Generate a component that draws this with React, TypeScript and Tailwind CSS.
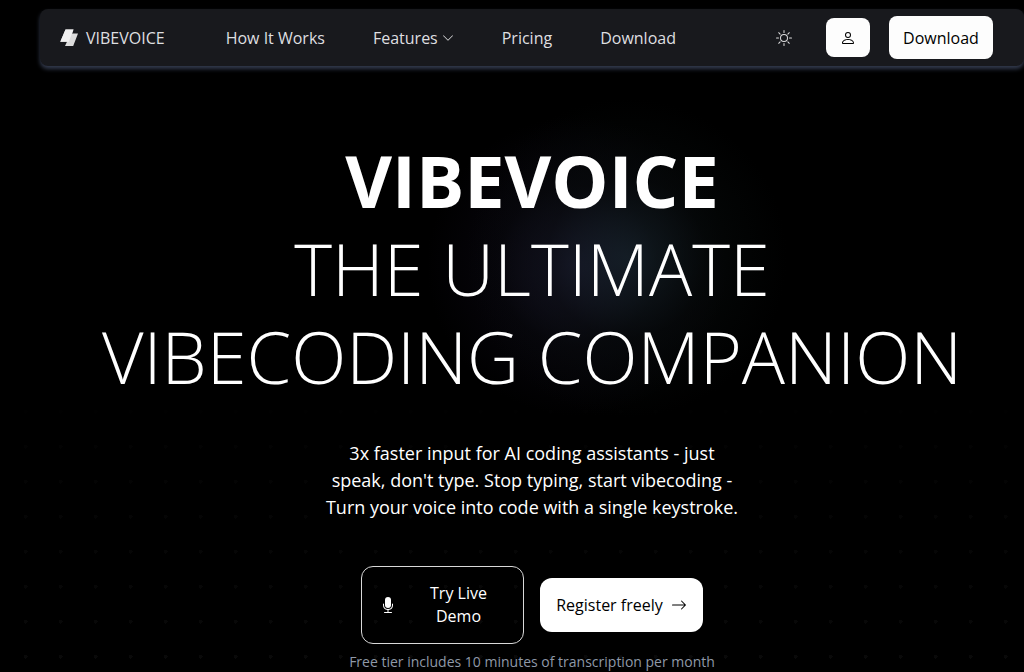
import { BsArrowRight, BsChevronDown, BsMicFill, BsPerson, BsSun } from 'react-icons/bs';

function Logo() {
  return (
    <svg width="18" height="18" viewBox="0 0 18 18" aria-hidden="true">
      <path d="M5.5 0.5H13.5L12 4.5H18L13.2 17H5L7 12.8H0.3Z" fill="#dcdcdc" />
      <path d="M5.5 0.5H13.5L8.8 12.8H0.3Z" fill="#f1f1f1" />
    </svg>
  );
}

function Header() {
  return (
    <header className="flex items-center justify-between min-h-[57px] pl-5 pr-[31px] rounded-lg bg-[#18191d] text-[#dfdfe0] shadow-[0_3px_4px_0_#333b4e]">
      <div className="flex items-center gap-[61px]">
        <a href="#" className="flex items-center gap-2">
          <Logo />
          VIBEVOICE
        </a>
        <nav className="flex items-center gap-12">
          <a href="#how-it-works">How It Works</a>
          <button type="button" className="flex items-center gap-1">
            Features
            <BsChevronDown size={12} />
          </button>
          <a href="#pricing">Pricing</a>
          <a href="#download">Download</a>
        </nav>
      </div>

      <div className="flex items-center gap-[19px]">
        <button type="button" aria-label="Toggle theme" className="mr-[15px]">
          <BsSun size={16} />
        </button>
        <button
          type="button"
          aria-label="Account"
          className="flex items-center justify-center w-11 h-[39px] rounded-lg bg-[#fdfdfd] text-black"
        >
          <BsPerson size={16} />
        </button>
        <a
          href="#download"
          className="flex items-center justify-center w-[104px] h-[43px] rounded-lg bg-[#fdfdfd] text-black"
        >
          Download
        </a>
      </div>
    </header>
  );
}

function Hero() {
  return (
    <section className="flex flex-col items-center pt-[70px] text-center">
      <h1 className="text-[72px] leading-[88px] font-light">
        <span className="block font-bold">VIBEVOICE</span>
        <span className="block">THE ULTIMATE</span>
        <span className="block">VIBECODING COMPANION</span>
      </h1>

      <p className="mt-10 max-w-[430px] text-[18px] leading-[27px]">
        3x faster input for AI coding assistants - just
        <br />
        speak, don't type. Stop typing, start vibecoding -
        <br />
        Turn your voice into code with a single keystroke.
      </p>

      <div className="flex items-center gap-4 mt-[45px]">
        <button
          type="button"
          className="flex items-center w-[163px] h-[78px] px-[18px] rounded-xl border border-[#d8d8d8]"
        >
          <BsMicFill size={16} className="shrink-0" />
          <span className="flex-1 ml-4 px-2 leading-[23px]">Try Live Demo</span>
        </button>
        <a
          href="#register"
          className="flex items-center justify-center gap-2 w-[163px] h-[54px] rounded-xl bg-white text-black"
        >
          Register freely
          <BsArrowRight size={16} />
        </a>
      </div>

      <p className="mt-2 text-sm text-[#8f99a8]">
        Free tier includes 10 minutes of transcription per month
      </p>
    </section>
  );
}

export default function App() {
  return (
    <div className="relative min-h-screen overflow-hidden bg-black text-white text-base font-['Open_Sans','Noto_Sans',sans-serif]">
      {/* Dotted backdrop, fading in towards the bottom */}
      <div className="absolute inset-0 bg-[radial-gradient(circle,#0a0a0a_2px,transparent_2px)] bg-[size:35px_35px] bg-[position:8px_9px] mask-[linear-gradient(to_bottom,transparent_55%,black)]" />
      {/* Glow behind the headline */}
      <div className="absolute inset-0 bg-[radial-gradient(circle_at_calc(50%+115px)_258px,#16242ab3,#080d0d80_80px,transparent_160px),radial-gradient(circle_at_calc(50%+65px)_266px,#1d1833,#0c091580_80px,transparent_150px)]" />

      <div className="relative pl-10 pt-[9px]">
        <Header />
        <Hero />
      </div>
    </div>
  );
}
